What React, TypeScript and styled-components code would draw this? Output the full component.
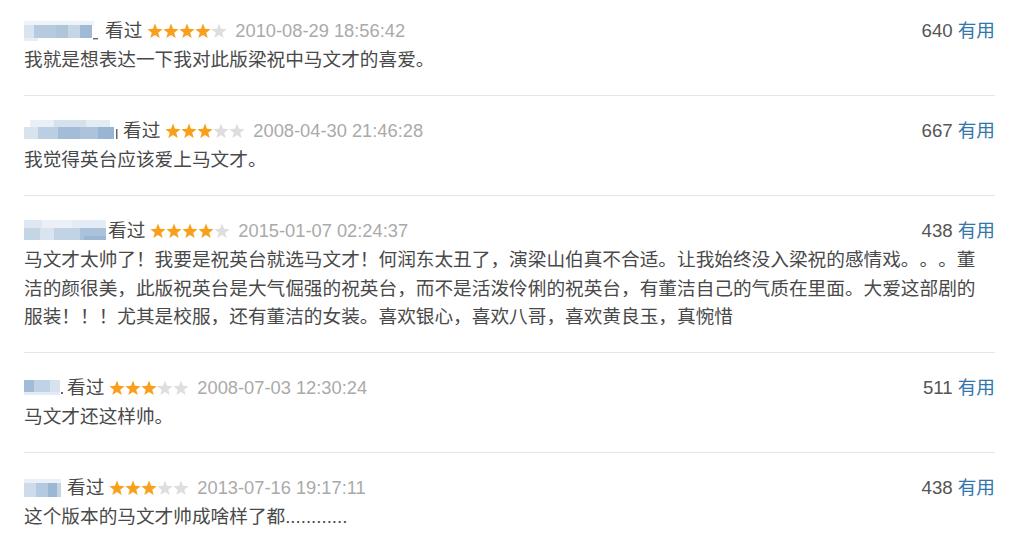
import React from "react";
import styled, { createGlobalStyle } from "styled-components";

const GlobalStyle = createGlobalStyle`
  html, body {
    margin: 0;
    padding: 0;
    background: #ffffff;
  }
  body {
    font-family: "Liberation Sans", Arial, "Noto Sans CJK SC", sans-serif;
    text-spacing-trim: space-all;
  }
`;

const List = styled.div`
  padding: 0 29px 0 24px;
`;

const Item = styled.div`
  padding: 20px 0 20.5px;
  border-bottom: 1px solid #e6e6e6;
  &:first-child {
    padding-top: 16px;
  }
  &:last-child {
    border-bottom: none;
  }
`;

const Header = styled.div`
  display: flex;
  align-items: center;
  justify-content: space-between;
  height: 30px;
`;

const Info = styled.div`
  display: flex;
  align-items: center;
`;

const Watched = styled.span<{ $gap: number }>`
  margin-left: ${(p) => p.$gap}px;
  font-size: 18.67px;
  color: #494949;
  line-height: 30px;
`;

const Stars = styled.span`
  display: inline-flex;
  margin-left: 5px;
`;

const DateText = styled.span`
  margin-left: 8px;
  font-size: 18.3px;
  color: #aaaaaa;
  line-height: 30px;
`;

const Votes = styled.div`
  font-size: 18.67px;
  line-height: 30px;
  color: #555555;
  display: flex;
  gap: 5px;
`;

const Useful = styled.a`
  color: #3377aa;
  text-decoration: none;
`;

const Body = styled.p`
  margin: 0;
  padding-right: 12px;
  font-size: 18.67px;
  line-height: 28.5px;
  color: #494949;
  text-spacing-trim: space-all;
`;

type Cell = [number, number, number, number, string];

const Mosaic = ({ width, cells }: { width: number; cells: Cell[] }) => (
  <svg width={width} height={22} viewBox={`0 0 ${width} 22`} style={{ display: "block" }}>
    <defs>
      <filter id="soft" x="-5%" y="-10%" width="110%" height="120%">
        <feGaussianBlur stdDeviation="0.6" />
      </filter>
    </defs>
    <g filter="url(#soft)">
      {cells.map(([x, y, w, h, c], i) => (
        <rect key={i} x={x} y={y} width={w} height={h} fill={c} />
      ))}
    </g>
  </svg>
);

const STAR =
  "8,0.6 10,5.85 15.61,6.13 11.23,9.65 12.7,15.07 8,12 3.3,15.07 4.77,9.65 0.39,6.13 6,5.85";

const Rating = ({ value }: { value: number }) => (
  <Stars>
    {[0, 1, 2, 3, 4].map((i) => (
      <svg key={i} width={16} height={16} viewBox="0 0 16 16">
        <polygon points={STAR} fill={i < value ? "#f8a01b" : "#dedede"} />
      </svg>
    ))}
  </Stars>
);

type Review = {
  mosaicWidth: number;
  cells: Cell[];
  gap: number;
  stars: number;
  date: string;
  votes: number;
  text: string;
};

const reviews: Review[] = [
  {
    mosaicWidth: 74,
    gap: 7,
    cells: [
      [0, 1, 70, 4, "#eef3f8"],
      [0, 5, 10, 13, "#d9e4ef"],
      [10, 5, 22, 13, "#b6cbe0"],
      [32, 5, 12, 13, "#aec5dc"],
      [44, 5, 12, 13, "#c6d6e7"],
      [56, 5, 12, 13, "#9fbad5"],
      [0, 18, 14, 3, "#e6edf5"],
      [69, 18, 5, 1.4, "#666666"],
    ],
    stars: 4,
    date: "2010-08-29 18:56:42",
    votes: 640,
    text: "我就是想表达一下我对此版梁祝中马文才的喜爱。",
  },
  {
    mosaicWidth: 94,
    gap: 5,
    cells: [
      [6, 0, 24, 7, "#e9eff6"],
      [30, 0, 32, 7, "#d5e1ed"],
      [62, 0, 24, 7, "#e3ebf3"],
      [0, 7, 14, 12, "#d8e3ee"],
      [14, 7, 20, 12, "#bccfe2"],
      [34, 7, 22, 12, "#a3bdd8"],
      [56, 7, 18, 12, "#acc3db"],
      [74, 7, 16, 12, "#98b5d3"],
      [92, 9, 1.5, 10, "#666666"],
    ],
    stars: 3,
    date: "2008-04-30 21:46:28",
    votes: 667,
    text: "我觉得英台应该爱上马文才。",
  },
  {
    mosaicWidth: 82,
    gap: 2,
    cells: [
      [0, 0, 18, 8, "#dfe8f2"],
      [18, 0, 30, 8, "#eaf0f6"],
      [48, 0, 34, 8, "#e3ebf4"],
      [0, 8, 16, 12, "#c4d5e6"],
      [16, 8, 14, 12, "#d9e4ef"],
      [30, 8, 26, 12, "#c2d3e5"],
      [56, 8, 26, 12, "#abc2db"],
      [60, 16, 22, 4, "#9bb7d4"],
    ],
    stars: 4,
    date: "2015-01-07 02:24:37",
    votes: 438,
    text:
      "马文才太帅了！我要是祝英台就选马文才！何润东太丑了，演梁山伯真不合适。让我始终没入梁祝的感情戏。。。董洁的颜很美，此版祝英台是大气倔强的祝英台，而不是活泼伶俐的祝英台，有董洁自己的气质在里面。大爱这部剧的服装！！！尤其是校服，还有董洁的女装。喜欢银心，喜欢八哥，喜欢黄良玉，真惋惜",
  },
  {
    mosaicWidth: 40,
    gap: 3,
    cells: [
      [0, 3, 10, 12, "#a2bcd8"],
      [10, 3, 16, 12, "#c0d2e5"],
      [26, 3, 10, 12, "#d6e2ee"],
      [0, 15, 36, 3, "#e2eaf3"],
      [37, 15, 2, 2, "#666666"],
    ],
    stars: 3,
    date: "2008-07-03 12:30:24",
    votes: 511,
    text: "马文才还这样帅。",
  },
  {
    mosaicWidth: 40,
    gap: 3,
    cells: [
      [0, 2, 37, 4, "#eaf0f6"],
      [0, 6, 12, 14, "#cddbea"],
      [12, 6, 12, 14, "#b4cae0"],
      [24, 6, 9, 14, "#9bb7d4"],
      [33, 6, 4, 14, "#c2d3e5"],
    ],
    stars: 3,
    date: "2013-07-16 19:17:11",
    votes: 438,
    text: "这个版本的马文才帅成啥样了都............",
  },
];

export default function App() {
  return (
    <>
      <GlobalStyle />
      <List>
        {reviews.map((r, i) => (
          <Item key={i}>
            <Header>
              <Info>
                <Mosaic width={r.mosaicWidth} cells={r.cells} />
                <Watched $gap={r.gap}>看过</Watched>
                <Rating value={r.stars} />
                <DateText>{r.date}</DateText>
              </Info>
              <Votes>
                <span>{r.votes}</span>
                <Useful href="#">有用</Useful>
              </Votes>
            </Header>
            <Body>{r.text}</Body>
          </Item>
        ))}
      </List>
    </>
  );
}
